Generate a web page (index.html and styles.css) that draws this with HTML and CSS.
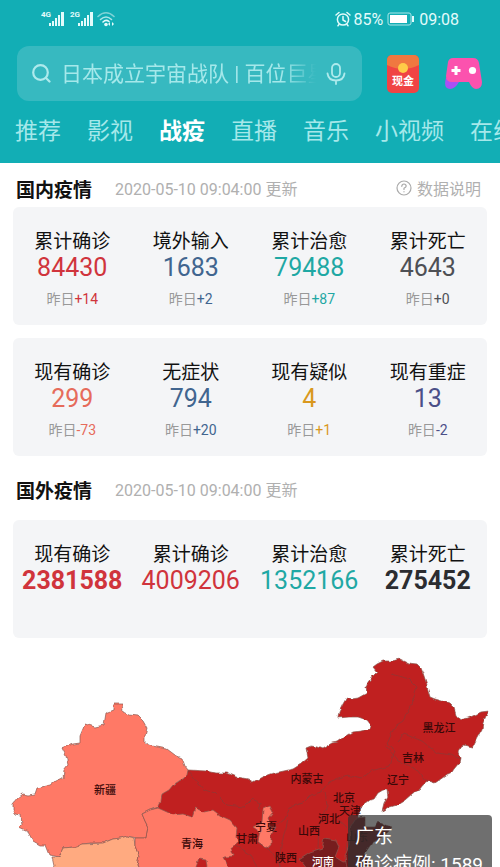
FILE: index.html
```html
<!DOCTYPE html>
<html lang="zh-CN">

<head>
    <meta charset="UTF-8">
    <meta name="viewport" content="width=device-width, initial-scale=1.0">
    <title>战疫</title>
    <link rel="stylesheet" href="styles.css">
</head>

<body>
    <header class="header">
        <div class="status">
            <svg class="signal" viewBox="0 0 76 20" width="76" height="20" aria-hidden="true">
                <g fill="#e3fbfb">
                    <text x="0" y="8" class="net">4G</text>
                    <path d="M8 14h2v3H8zM11 12h2v5h-2zM14 9h2v8h-2zM17 6h2v11h-2zM20 3h3v14h-3z" />
                    <text x="29" y="8" class="net">2G</text>
                    <path d="M37 14h2v3h-2zM40 12h2v5h-2zM43 9h2v8h-2zM46 6h2v11h-2zM49 3h3v14h-3z" />
                    <circle cx="65" cy="15.500" r="1.800" />
                    <path d="M67 15l2-2v4zM73 15l-2-2v4z" />
                </g>
                <g fill="none" stroke-width="1.600" stroke-linecap="round">
                    <path d="M57 7.500Q65 0 73 7.500" stroke="#7fd3d6" />
                    <path d="M59.500 10.500Q65 5.500 70.500 10.500" stroke="#a9e6e8" />
                    <path d="M62 13Q65 10 68 12.500" stroke="#e3fbfb" />
                </g>
            </svg>
            <div class="status-right">
                <svg viewBox="0 0 16 16" width="16" height="16" fill="none" stroke="#e3fbfb" stroke-width="1.500" stroke-linecap="round" aria-hidden="true">
                    <circle cx="8" cy="8.500" r="5.600" />
                    <path d="M8 5.500v3.500l2.500 1.500M1 4l3-2.500M15 4l-3-2.500M4 13.500l-1 1.300M12 13.500l1 1.300" />
                </svg>
                <span>85%</span>
                <svg class="battery" viewBox="0 0 28 14" width="28" height="14" aria-hidden="true">
                    <rect x="1" y="1" width="23" height="12" rx="2" fill="none" stroke="#a9e6e8" />
                    <rect x="3" y="3" width="17" height="8" fill="#fff" />
                    <path d="M26 4v6" stroke="#e3fbfb" stroke-width="2" />
                </svg>
                <span>09:08</span>
            </div>
        </div>

        <div class="top">
            <form class="search">
                <svg viewBox="0 0 20 20" width="20" height="20" fill="none" stroke="#aeeaec" stroke-width="2.200" stroke-linecap="round" aria-hidden="true">
                    <circle cx="9.500" cy="8.500" r="7.300" />
                    <path d="M15 14l3.500 3.500" />
                </svg>
                <input type="text" aria-label="搜索" placeholder="日本成立宇宙战队 | 百位巨星">
                <button type="button" class="mic" aria-label="语音搜索">
                    <svg viewBox="0 0 20 22" width="20" height="22" fill="none" stroke="#aeeaec" stroke-width="1.800" stroke-linecap="round">
                        <rect x="6" y="1" width="8" height="13" rx="4" />
                        <path d="M1.500 10.500Q2.500 17.500 10 17.500T18.500 10.500M10 17.500V21" />
                    </svg>
                </button>
            </form>
            <button type="button" class="app" aria-label="现金">
                <svg viewBox="0 0 34 40" width="34" height="40">
                    <rect x="1" y="1" width="32" height="38" rx="5" fill="#f04444" />
                    <path d="M1 11V6a5 5 0 0 1 5-5h22a5 5 0 0 1 5 5v5q-16 8-32 0z" fill="#f07840" />
                    <circle cx="17" cy="14" r="5" fill="#ffcb48" />
                    <text x="17" y="31" text-anchor="middle" class="cash">现金</text>
                </svg>
            </button>
            <button type="button" class="app" aria-label="游戏">
                <svg viewBox="0 0 38 34" width="38" height="34">
                    <path d="M2 21Q-1 32 6 32q5 0 9-7l-5-9z" fill="#a950f5" />
                    <path d="M9 1h20q5 0 6 5l3 19q0 7-6 7-4 0-7-7H8q-6 0-6-6L4 5q1-4 5-4z" fill="#fb52ae" />
                    <path d="M12 9v9M7.500 13.500h9" stroke="#fff" stroke-width="3" />
                    <circle cx="28.500" cy="13.500" r="3.600" fill="#fff" />
                </svg>
            </button>
        </div>

        <nav class="tabs">
            <a href="#">推荐</a>
            <a href="#">影视</a>
            <a href="#" class="active">战疫</a>
            <a href="#">直播</a>
            <a href="#">音乐</a>
            <a href="#">小视频</a>
            <a href="#">在线</a>
        </nav>
    </header>

    <main>
        <section class="section">
            <div class="section-head">
                <h2>国内疫情</h2>
                <span class="time">2020-05-10 09:04:00 更新</span>
                <a href="#" class="explain">
                    <svg viewBox="0 0 16 16" width="16" height="16" fill="none" stroke="#aaa" stroke-width="1.200" stroke-linecap="round" aria-hidden="true">
                        <circle cx="8" cy="8" r="7" />
                        <path d="M5.800 6.300Q6 4 8 4t2.200 2.100Q10.200 7.200 8 8.300V9.500M8 11.700v.1" />
                    </svg>
                    数据说明
                </a>
            </div>
            <div class="card">
                <div class="item red"><h3>累计确诊</h3><strong>84430</strong><p>昨日<span>+14</span></p></div>
                <div class="item blue"><h3>境外输入</h3><strong>1683</strong><p>昨日<span>+2</span></p></div>
                <div class="item green"><h3>累计治愈</h3><strong>79488</strong><p>昨日<span>+87</span></p></div>
                <div class="item gray"><h3>累计死亡</h3><strong>4643</strong><p>昨日<span>+0</span></p></div>
            </div>
            <div class="card">
                <div class="item coral"><h3>现有确诊</h3><strong>299</strong><p>昨日<span>-73</span></p></div>
                <div class="item blue"><h3>无症状</h3><strong>794</strong><p>昨日<span>+20</span></p></div>
                <div class="item yellow"><h3>现有疑似</h3><strong>4</strong><p>昨日<span>+1</span></p></div>
                <div class="item purple"><h3>现有重症</h3><strong>13</strong><p>昨日<span>-2</span></p></div>
            </div>
        </section>

        <section class="section foreign">
            <div class="section-head">
                <h2>国外疫情</h2>
                <span class="time">2020-05-10 09:04:00 更新</span>
            </div>
            <div class="card">
                <div class="item red bold"><h3>现有确诊</h3><strong>2381588</strong></div>
                <div class="item red"><h3>累计确诊</h3><strong>4009206</strong></div>
                <div class="item green"><h3>累计治愈</h3><strong>1352166</strong></div>
                <div class="item black bold"><h3>累计死亡</h3><strong>275452</strong></div>
            </div>
        </section>

        <section class="map">
            <svg class="china" viewBox="0 651 500 216" role="img" aria-label="全国疫情地图">
                <defs>
                    <!-- roughens the borders -->
                    <filter id="rough" x="-2%" y="-2%" width="104%" height="104%" color-interpolation-filters="sRGB">
                        <feTurbulence type="fractalNoise" baseFrequency="0.16" numOctaves="1" seed="4" />
                        <feDisplacementMap in="SourceGraphic" scale="4" xChannelSelector="R" yChannelSelector="G" />
                    </filter>
                </defs>
                <g filter="url(#rough)" stroke="#8a5a52" stroke-width="0.700" stroke-linejoin="round">
                    <path fill="#c02020" d="M188 770L207 771 216 773 227 773 237 777 248 779 253 782 262 777 270 774 293 769 301 764 308 758 306 748 311 746 317 747 322 749 332 743 338 742 345 737 353 732 361 731 370 729 371 725 367 720 358 717 349 717 338 718 339 712 343 704 347 697 352 699 358 698 367 693 366 688 368 682 373 676 377 672 373 667 377 664 383 661 391 661 400 659 408 663 417 664 421 668 423 673 426 682 428 690 430 697 435 699 442 701 450 704 454 708 456 715 460 720 468 718 475 715 481 712 489 711 486 716 483 723 482 730 478 737 473 747 463 745 458 752 460 758 459 763 454 769 452 772 448 774 435 783 429 781 423 785 419 790 413 793 405 800 397 805 390 807 382 812 384 804 388 797 387 790 383 790 378 793 374 799 370 800 360 808 358 817 365 827 365 875 130 875 142 814 158 807 162 794 173 785 185 777z" />
                    <path fill="#ff7966" d="M114 704L122 704 123 712 129 715 138 716 143 721 147 728 145 736 145 743 151 746 157 747 167 749 175 755 182 758 185 766 188 770 187 775 185 777 173 785 169 790 162 794 161 801 158 807 150 810 142 814 145 821 148 827 146 838 137 838 127 836 121 838 113 839 103 843 91 843 82 844 77 848 74 847 63 848 59 857 50 855 46 845 40 845 33 841 28 832 19 828 22 825 21 815 16 814 13 810 13 804 18 798 23 794 28 795 35 794 37 788 50 785 56 781 63 778 64 770 68 765 66 756 62 748 73 744 80 743 80 736 85 724 95 727 104 725 106 713 114 710z" />
                    <path fill="#ffaa80" d="M59 857L63 848 74 847 82 844 103 843 113 839 121 838 127 836 134 838 135 846 139 856 137 866 142 875 48 875 54 866 52 857z" />
                    <path fill="#ff7966" d="M142 814L150 810 158 808 167 812 173 815 183 814 192 817 195 808 204 812 213 810 221 816 230 820 237 828 236 836 238 842 231 848 234 856 224 857 228 865 235 875 208 875 206 860 199 859 196 867 202 875 142 875 137 866 139 856 135 846 135 838 146 838 148 827 145 821z" />
                    <path fill="#ff7966" d="M263 809L270 806 273 812 268 818 271 825 276 827 271 835 271 845 266 848 258 842 260 832 253 827 262 822z" />
                    <path fill="#761d1e" d="M299 859L310 852 322 848 324 839 336 841 339 847 335 857 343 862 350 861 354 875 310 875 305 866z" />
                    <path fill="#6f1719" d="M350 829L357 818 365 817 365 827 375 827 378 822 385 825 392 827 388 832 382 837 372 843 365 853 368 860 373 875 348 875 345 856 349 846z" />
                </g>
                <g class="borders" filter="url(#rough)">
                    <path d="M188 771l15 18 12 4 12 12 17 2 8-8 9 4-2 8" />
                    <path d="M277 825l8-6 5-12 13-4 8-8 10-3 8-10 18-7 14 4 10-8 19-5 5-16-8-6 8-18 8-5 8-16 6-18-8-8-18-5" />
                    <path d="M397 742l7-8 18 7 15 12 15 2 8 4" />
                    <path d="M386 746l12 15 18 8 12 14" />
                    <path d="M288 820l-7 26-2 25" />
                    <path d="M325 791l2 15-8 17-1 25M338 819l11 10-3 22M335 800l11-7 8 8-5 9z" />
                    <path d="M235 845l15 9 8 15M258 842l14 10 9 15" />
                </g>
                <g class="names">
                    <text x="105" y="794">新疆</text>
                    <text x="192" y="848">青海</text>
                    <text x="247" y="843">甘肃</text>
                    <text x="266" y="831">宁夏</text>
                    <text x="307" y="783">内蒙古</text>
                    <text x="439" y="732">黑龙江</text>
                    <text x="413" y="762">吉林</text>
                    <text x="398" y="784">辽宁</text>
                    <text x="344" y="802">北京</text>
                    <text x="350" y="815">天津</text>
                    <text x="329" y="823">河北</text>
                    <text x="309" y="835">山西</text>
                    <text x="286" y="862">陕西</text>
                    <text x="357" y="841">山东</text>
                    <text x="323" y="866" class="light">河南</text>
                </g>
            </svg>
            <div class="tooltip">
                <div>广东</div>
                <div>确诊病例: 1589</div>
            </div>
        </section>
    </main>
</body>

</html>
```

FILE: styles.css
```css
*{margin: 0;padding: 0;box-sizing: border-box;}
body{font-family: Roboto, "Noto Sans CJK SC", sans-serif;background: #fff;color: #111;overflow-x: hidden;}
a{text-decoration: none;color: inherit;}
button{border: none;background: none;font: inherit;cursor: pointer;}
svg{display: block;flex: none;}

/* header */
.header{background: #12aeb5;color: #e3fbfb;}
.status{display: flex;justify-content: space-between;align-items: center;height: 38px;padding: 0 41px;font-size: 16px;}
.status-right{display: flex;align-items: center;gap: 2px;}
.battery{margin: 0 2px;}
.net{font-size: 8px;font-weight: 700;}
.top{display: flex;align-items: center;padding: 8px 18px 0 17px;gap: 24px;}
.search{flex: 1;min-width: 0;display: flex;align-items: center;height: 55px;padding: 0 16px 0 14px;gap: 10px;border-radius: 12px;background: #37b9c0;}
.search input{flex: 1;min-width: 0;height: 40px;border: none;outline: none;background: none;font: inherit;font-size: 21px;color: #fff;-webkit-mask-image: linear-gradient(to right, #000 86%, transparent 100%);mask-image: linear-gradient(to right, #000 86%, transparent 100%);}
.search input::placeholder{color: #a5e8ea;opacity: 1;}
.cash{font-size: 11px;font-weight: 700;fill: #fff;}
.tabs{display: flex;gap: 26px;height: 62px;padding-left: 15px;line-height: 62px;font-size: 23px;color: #a5e8ea;white-space: nowrap;overflow: hidden;}
.tabs a{flex: none;}
.tabs .active{color: #fff;font-weight: 700;}

/* numbers */
.section{padding: 0 13px;}
.section-head{display: flex;align-items: center;height: 44px;padding: 6px 6px 0 3px;font-size: 16px;color: #b0b0b0;}
.section-head h2{font-size: 19px;color: #111;margin-right: 23px;}
.explain{display: flex;align-items: center;gap: 5px;margin-left: auto;}
.card{display: grid;grid-template-columns: repeat(4, 1fr);min-height: 118px;padding: 22px 0 14px;margin-bottom: 13px;border-radius: 6px;background: #f4f5f7;text-align: center;}
.item h3{font-size: 19px;line-height: 26px;font-weight: 400;color: #111;}
.item strong{display: block;font-size: 25px;line-height: 26px;font-weight: 400;}
.item p{margin-top: 6px;font-size: 14px;line-height: 24px;color: #999;}
.item strong, .item span{color: var(--color);}
.bold strong{font-weight: 700;}
.red{--color: #d0343c;}
.blue{--color: #41658f;}
.green{--color: #1fa8a4;}
.gray{--color: #4e5055;}
.coral{--color: #e66b5b;}
.yellow{--color: #d9981e;}
.purple{--color: #4b4f88;}
.black{--color: #2b2c30;}
.foreign .section-head{height: 40px;padding-top: 0;}
.foreign .card{margin-top: 11px;}

/* map */
.map{position: relative;overflow: hidden;}
.china{width: 100%;height: auto;}
.borders{fill: none;stroke: #8a3a36;stroke-width: 0.7;}
.names{font-size: 11px;fill: #3a0808;text-anchor: middle;font-weight: 500;}
.names .light{fill: #fff;}
.tooltip{position: absolute;top: 76%;right: 8px;width: 144px;padding: 8px 7px;border-radius: 4px;background: rgba(50, 50, 50, 0.7);color: #fff;font-size: 19px;line-height: 28px;white-space: nowrap;}
```
